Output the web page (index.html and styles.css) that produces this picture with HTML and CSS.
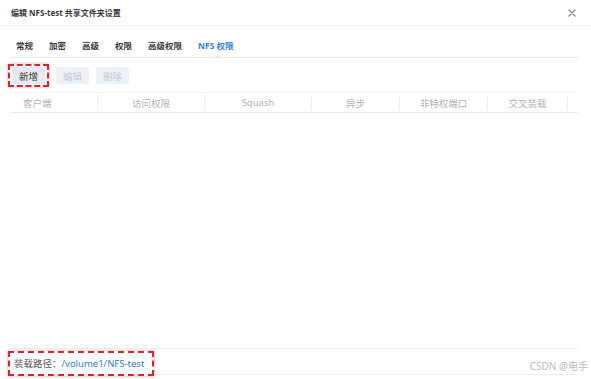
FILE: index.html
```html
<!DOCTYPE html>
<html lang="en">
<head>
    <meta charset="UTF-8">
    <meta name="viewport" content="width=device-width, initial-scale=1.0">
    <title>编辑 NFS-test 共享文件夹设置</title>
    <link rel="stylesheet" href="styles.css">
</head>
<body>
    <div class="dialog">
        <div class="header">
            <span class="title">编辑 NFS-test 共享文件夹设置</span>
            <svg class="close" width="8" height="8" viewBox="0 0 8 8">
                <path d="M1 1L7 7M7 1L1 7" stroke="#8a8a8a" stroke-width="1.3" stroke-linecap="round"/>
            </svg>
        </div>

        <div class="tabs">
            <span class="tab">常规</span>
            <span class="tab">加密</span>
            <span class="tab">高级</span>
            <span class="tab">权限</span>
            <span class="tab">高级权限</span>
            <span class="tab active">NFS 权限</span>
        </div>

        <div class="toolbar">
            <span class="mark">
                <button class="btn">新增</button>
            </span>
            <button class="btn" disabled>编辑</button>
            <button class="btn" disabled>删除</button>
        </div>

        <div class="grid-head">
            <div class="col col-client">客户端</div>
            <div class="col col-wide">访问权限</div>
            <div class="col col-wide">Squash</div>
            <div class="col col-mid">异步</div>
            <div class="col col-mid">非特权端口</div>
            <div class="col col-cross">交叉装载</div>
            <div class="col col-end"></div>
        </div>

        <div class="grid-body"></div>

        <div class="footer">
            <span class="mark mark-path">
                <span class="label">装载路径：</span><span class="path">/volume1/NFS-test</span>
            </span>
            <span class="watermark">CSDN @电手</span>
        </div>
    </div>
</body>
</html>
```

FILE: styles.css
```css
body {
    margin: 0;
    background-color: #fff;
    font-family: "Noto Sans", "Noto Sans CJK SC", sans-serif;
}

.dialog {
    display: flex;
    flex-direction: column;
    width: 591px;
    height: 379px;
    position: relative;
}

.header {
    display: flex;
    justify-content: space-between;
    align-items: center;
    height: 25px;
    padding: 0 15px 0 11px;
    border-bottom: 1px solid #f3f3f3;
}

.title {
    font-size: 8px;
    font-weight: bold;
    color: #3a3a3a;
}

.close {
    margin-top: 1px;
}

.tabs {
    display: flex;
    gap: 16px;
    margin: 0 13px 0 10px;
    padding: 14px 0 5px 6px;
    border-bottom: 1px solid #e8eaed;
    position: relative;
}

.tab {
    font-size: 8.5px;
    font-weight: bold;
    line-height: 12px;
    color: #3a3a3a;
}

.tab.active {
    color: #2f7fdb;
    position: relative;
}

/* small notch under the active tab */
.tab.active::after {
    content: "";
    position: absolute;
    left: 16px;
    bottom: -6px;
    border-left: 4px solid transparent;
    border-right: 4px solid transparent;
    border-bottom: 3px solid #e8eaed;
}

.toolbar {
    display: flex;
    align-items: center;
    gap: 7px;
    margin: 6px 0 0 8px;
}

.mark {
    display: inline-flex;
    align-items: center;
    border: 2px dashed #d7262c;
    box-shadow: 0 0 3px rgba(120, 0, 0, 0.35);
    padding: 1px 2px;
}

.btn {
    font-family: "Noto Sans", "Noto Sans CJK SC", sans-serif;
    font-size: 9.5px;
    width: 33px;
    height: 17px;
    padding: 0;
    border: none;
    border-radius: 2px;
    background-color: #e6eaef;
    color: #3a3a3a;
}

.btn:disabled {
    background-color: #eef1f5;
    color: #c4cad3;
}

.grid-head {
    display: flex;
    margin: 5px 13px 0 10px;
    height: 19px;
    border-top: 1px solid #f5f5f5;
    border-bottom: 1px solid #ebebeb;
}

.col {
    display: flex;
    align-items: center;
    justify-content: center;
    font-size: 9.5px;
    color: #b3b3b3;
    border-right: 1px solid #ededed;
    margin: 2px 0;
    box-sizing: border-box;
}

.col-client {
    width: 88px;
    justify-content: flex-start;
    padding-left: 13px;
}

.col-wide {
    width: 107px;
}

.col-mid {
    width: 88px;
}

.col-cross {
    width: 80px;
}

.col-end {
    width: 10px;
    border-right: none;
}

.grid-body {
    flex: 1;
}

.footer {
    display: flex;
    align-items: center;
    height: 25px;
    margin: 0 13px 4px 8px;
    border-top: 1px solid #f0f0f0;
    border-bottom: 1px solid #eeeeee;
}

.mark-path {
    height: 21px;
    padding: 0 8px 0 4px;
    margin-top: 1px;
    margin-bottom: -2px;
    font-size: 9.5px;
}

.label {
    color: #555;
}

.path {
    color: #2f7ad1;
}

.watermark {
    position: absolute;
    right: 3px;
    bottom: 6px;
    font-size: 10px;
    color: #b9b9b9;
}
```
